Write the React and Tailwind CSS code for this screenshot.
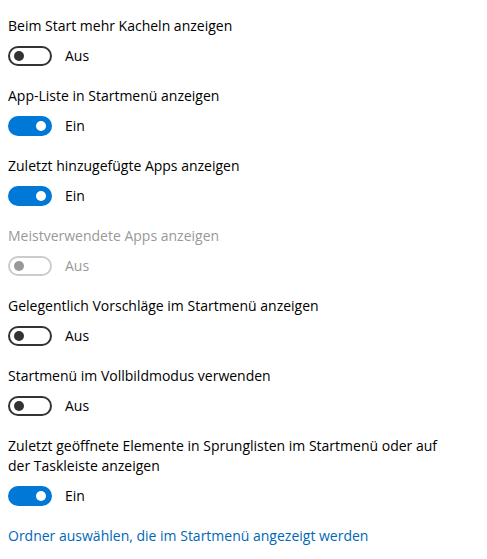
const SETTINGS = [
  { label: 'Beim Start mehr Kacheln anzeigen', on: false },
  { label: 'App-Liste in Startmenü anzeigen', on: true },
  { label: 'Zuletzt hinzugefügte Apps anzeigen', on: true },
  { label: 'Meistverwendete Apps anzeigen', on: false, disabled: true },
  { label: 'Gelegentlich Vorschläge im Startmenü anzeigen', on: false },
  { label: 'Startmenü im Vollbildmodus verwenden', on: false },
  { label: 'Zuletzt geöffnete Elemente in Sprunglisten im Startmenü oder auf der Taskleiste anzeigen', on: true },
]

function Toggle({ on, disabled }) {
  if (on) {
    return (
      <div className="flex h-5 w-11 items-center justify-end rounded-full bg-[#0078d7] pr-[6px]">
        <div className="h-[10px] w-[10px] rounded-full bg-white" />
      </div>
    )
  }
  return (
    <div
      className={
        'flex h-5 w-11 items-center rounded-full border-2 pl-[4px] ' +
        (disabled ? 'border-[#cccccc]' : 'border-[#333333]')
      }
    >
      <div className={'h-[10px] w-[10px] rounded-full ' + (disabled ? 'bg-[#999999]' : 'bg-[#333333]')} />
    </div>
  )
}

export default function App() {
  return (
    <div
      className="min-h-screen bg-white px-2 pt-[16px] text-[14px] leading-5 text-black"
      style={{ fontFamily: '"Open Sans", "Noto Sans", sans-serif' }}
    >
      {SETTINGS.map((s) => (
        <div key={s.label} className="mb-5 max-w-[450px]">
          <div className={s.disabled ? 'text-[#999999]' : ''}>{s.label}</div>
          <div className="mt-[10px] flex items-center gap-[13px]">
            <Toggle on={s.on} disabled={s.disabled} />
            <span className={s.disabled ? 'text-[#999999]' : ''}>{s.on ? 'Ein' : 'Aus'}</span>
          </div>
        </div>
      ))}
      <a href="#" className="text-[#0067b8]">Ordner auswählen, die im Startmenü angezeigt werden</a>
    </div>
  )
}
